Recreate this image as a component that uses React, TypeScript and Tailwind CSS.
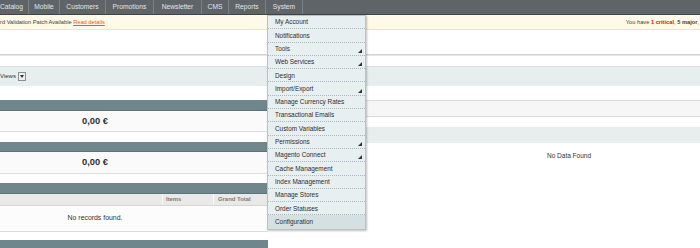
import React from "react";

const menu: [string, boolean][] = [
  ["My Account", false],
  ["Notifications", false],
  ["Tools", true],
  ["Web Services", true],
  ["Design", false],
  ["Import/Export", true],
  ["Manage Currency Rates", false],
  ["Transactional Emails", false],
  ["Custom Variables", false],
  ["Permissions", true],
  ["Magento Connect", true],
  ["Cache Management", false],
  ["Index Management", false],
  ["Manage Stores", false],
  ["Order Statuses", false],
  ["Configuration", false],
];

function BoxHead({ h }: { h: string }) {
  return <div className={`${h} bg-[#6f868d] border-b border-[#5d7279]`} />;
}

export default function App() {
  return (
    <div className="relative w-[700px] h-[248px] overflow-hidden bg-white font-['Liberation_Sans',Arial,sans-serif]">
      <div className="ml-[-78px] w-[942px]">
        {/* nav */}
        <div className="h-[15px] bg-[#5e6468] border-b border-[#3f4447] flex pl-[73px] text-[6.7px] text-[#e2e4e5]">
          <div className="w-[34px] flex items-center justify-center border-r border-[#7b8286]">Catalog</div>
          <div className="w-[31px] flex items-center justify-center border-r border-[#7b8286]">Mobile</div>
          <div className="w-[46px] flex items-center justify-center border-r border-[#7b8286]">Customers</div>
          <div className="w-[48px] flex items-center justify-center border-r border-[#7b8286]">Promotions</div>
          <div className="w-[48px] flex items-center justify-center border-r border-[#7b8286]">Newsletter</div>
          <div className="w-[27px] flex items-center justify-center border-r border-[#7b8286]">CMS</div>
          <div className="w-[37px] flex items-center justify-center border-r border-[#7b8286]">Reports</div>
          <div className="w-[37px] flex items-center justify-center border-r border-[#7b8286]">System</div>
        </div>
        {/* notice */}
        <div className="h-[15px] bg-[#fff9e9] border-b border-[#efe3c3] flex items-center text-[5.7px] text-[#404040] whitespace-nowrap">
          <div className="w-[700px] shrink-0 pl-[78px]">
            rd Validation Patch Available{" "}
            <span className="text-[#eb5e00] underline">Read details</span>
          </div>
          <div className="w-[77px] shrink-0 flex justify-end">
            <span>
              You have <span className="font-bold text-[#e41101]">1 critical</span>, <span className="font-bold">5 major</span>,
            </span>
          </div>
        </div>
        <div className="h-[24px]" />
        <div className="h-[2px] border-t border-[#d3d3d3] border-b border-b-[#e7e7e7]" />
        <div className="h-[10px]" />
        {/* store switcher */}
        <div className="h-[20px] bg-[#e6eeee] border-t border-[#d8e1e1] flex items-center text-[6px] text-[#333] pl-[78px]">
          <div className="whitespace-nowrap">Views</div>
          <div className="ml-[2px] w-[8px] h-[9px] border border-[#8f8f8f] bg-[#eeeeee] flex items-center justify-center">
            <svg width="4" height="3" viewBox="0 0 4 3"><polygon points="0,0 4,0 2,3" fill="#333" /></svg>
          </div>
        </div>
        <div className="h-[14px]" />
        {/* columns */}
        <div className="flex gap-[6px]">
          <div className="w-[346px] flex flex-col">
            <BoxHead h="h-[11px]" />
            <div className="h-[21px] bg-[#fafafa] border-b border-[#dedede] flex items-center justify-center text-[9.4px] font-bold text-[#2f2f2f]">0,00 €</div>
            <div className="h-[10px]" />
            <BoxHead h="h-[10px]" />
            <div className="h-[22px] bg-[#fafafa] border-b border-[#dedede] flex items-center justify-center text-[9.4px] font-bold text-[#2f2f2f]">0,00 €</div>
            <div className="h-[9px]" />
            <BoxHead h="h-[11px]" />
            <div className="h-[12px] bg-[#e9e9e9] border-b border-[#d6d6d6] grid grid-cols-[240px_51px_55px] text-[5.9px] font-bold text-[#7a7a7a]">
              <div />
              <div className="flex items-center pl-[3px] border-l border-[#f8f8f8]">Items</div>
              <div className="flex items-center pl-[4px] border-l border-[#f8f8f8]">Grand Total</div>
            </div>
            <div className="h-[26px] bg-[#fcfcfc] border-b border-[#dcdcdc] flex items-center justify-center text-[6.9px] text-[#333]">No records found.</div>
            <div className="h-[8px]" />
            <BoxHead h="h-[11px]" />
          </div>
          <div className="w-[590px] flex flex-col">
            <div className="h-[17px] bg-[#f6f6f6] border-t border-b border-[#dcdcdc]" />
            <div className="h-[10px]" />
            <div className="h-[16px] bg-[#e6eeee]" />
            <div className="mt-[8px] text-center text-[6.5px] leading-[10px] text-[#333]">No Data Found</div>
          </div>
        </div>
      </div>

      {/* dropdown menu */}
      <div className="absolute left-[267px] top-[15px] w-[99px] bg-[#e8eff1] border border-[#b7c3c6] shadow-[1px_1px_2px_rgba(0,0,0,0.25)]">
        {menu.map(([label, sub], i) => (
          <div
            key={label}
            className={`relative h-[13.3px] flex items-center pl-[7px] text-[6.4px] text-[#2d2d2d] ${
              i < menu.length - 1 ? "border-b border-dotted border-[#a9b8bc]" : "bg-[#d5e0e3]"
            }`}
          >
            {label}
            {sub && (
              <svg className="absolute right-[3px] bottom-[2px]" width="4" height="4" viewBox="0 0 4 4">
                <polygon points="4,0 4,4 0,4" fill="#333" />
              </svg>
            )}
          </div>
        ))}
      </div>
    </div>
  );
}
